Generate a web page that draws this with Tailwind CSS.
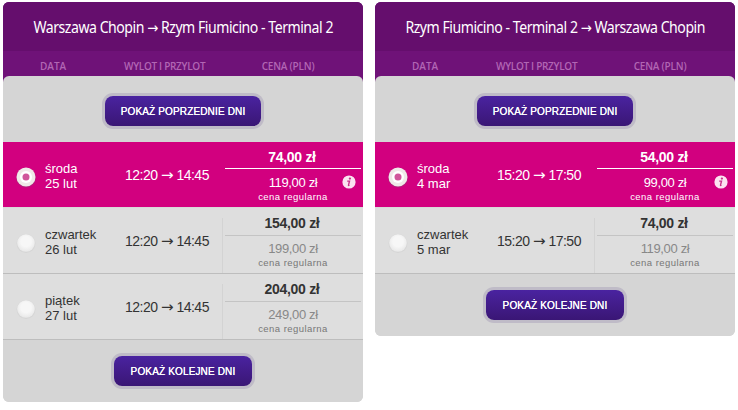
<!DOCTYPE html>
<html lang="pl">
<head>
    <meta charset="UTF-8">
    <meta name="viewport" content="width=device-width, initial-scale=1.0">
    <title>Wybierz lot</title>
    <script src="https://cdn.jsdelivr.net/npm/@tailwindcss/browser@4"></script>
</head>
<body class="bg-white font-['Liberation_Sans',Arial,sans-serif] text-[#333]">
    <svg class="absolute size-0">
        <defs>
            <radialGradient id="knob" cx="50%" cy="42%" r="58%">
                <stop offset="0.5" stop-color="#f7f7f7"/>
                <stop offset="1" stop-color="#e8e8e8"/>
            </radialGradient>
            <symbol id="radio-on" viewBox="0 0 22 22">
                <circle cx="11" cy="11.8" r="9.8" fill="#8f3f78" opacity=".5"/>
                <circle cx="11" cy="11" r="9.5" fill="#efe9e8"/>
                <circle cx="11" cy="11" r="6" fill="#fff"/>
                <circle cx="11" cy="11" r="3.5" fill="#d0569b"/>
            </symbol>
            <symbol id="radio-off" viewBox="0 0 22 22">
                <circle cx="11" cy="11.5" r="9.5" fill="#d6d6d6"/>
                <circle cx="11" cy="11" r="8.8" fill="url(#knob)"/>
            </symbol>
            <symbol id="info" viewBox="0 0 14 14">
                <circle cx="7" cy="7" r="6.6" fill="#fbe3f0"/>
                <circle cx="7.9" cy="3.6" r="1.15" fill="#c9308a"/>
                <path d="M5.2 6.1h2.3L6.5 10.2q-.1.6.9 0" fill="none" stroke="#c9308a" stroke-width="1.4"/>
            </symbol>
        </defs>
    </svg>

    <main class="flex items-start gap-3 pl-[3px] pt-[2px]">
        <!-- outbound -->
        <section class="w-[360px] shrink-0 overflow-hidden rounded-md bg-[#d5d5d5]">
            <div class="bg-[#6f1278] pb-1.5">
                <h2 class="flex h-[49px] items-center justify-center bg-[#650e6d] pt-0.5 font-['Noto_Sans'] text-base text-white"><span class="scale-x-[.88] whitespace-nowrap tracking-[-0.53px]">Warszawa Chopin <span class="font-['DejaVu_Sans'] text-[15px]">→</span> Rzym Fiumicino - Terminal 2</span></h2>
                <div class="flex h-[25px] items-center pt-[6px] font-['Open_Sans'] text-[10px] font-semibold text-[#b266b4]">
                    <span class="ml-[37px] w-[84px]">DATA</span>
                    <span class="w-[101px] whitespace-nowrap tracking-[-0.3px]">WYLOT I PRZYLOT</span>
                    <span class="w-[126px] text-center tracking-[-0.2px]">CENA (PLN)</span>
                </div>
            </div>
            <div class="-mt-1.5 rounded-t-md bg-[#d5d5d5]">
                <div class="flex h-[66px] items-center justify-center pt-1">
                    <button class="h-[30px] w-[156px] whitespace-nowrap rounded-lg bg-linear-to-b from-[#4a23a0] to-[#3a1675] pt-px text-[10px] tracking-[0.15px] text-white ring-[3px] ring-[#bfbbc7] text-shadow-[0_0_0_#fff]">POKAŻ POPRZEDNIE DNI</button>
                </div>

                <div class="flex h-[66px] items-center border-b border-[#d9d9d9] bg-[#d2007f] text-white">
                    <svg class="ml-3 mt-1 size-[22px]"><use href="#radio-on"/></svg>
                    <div class="ml-2 mt-0.5 w-20 text-[13px] leading-[15px]">środa<br>25 lut</div>
                    <div class="w-[100px] whitespace-nowrap pt-px text-sm tracking-[-0.5px]">12:20 <span class="font-['DejaVu_Sans'] text-[15px] leading-none">→</span> 14:45</div>
                    <div class="relative h-full w-[136px] text-center">
                        <div class="h-[27px] border-b border-white pr-0.5 pt-[5px] text-sm font-bold leading-5 tracking-[-0.3px]">74,00 zł</div>
                        <div class="pt-1.5 text-[13px] leading-[15px] tracking-[-0.35px]">119,00 zł</div>
                        <div class="pt-px text-[9.5px] leading-[11px] tracking-[0.45px]">cena regularna</div>
                        <svg class="absolute right-[5px] top-[33px] size-[14px]"><use href="#info"/></svg>
                    </div>
                </div>

                <div class="flex h-[66px] items-center border-b border-[#bdbdbd] bg-[#dedede]">
                    <svg class="ml-3 mt-1 size-[22px]"><use href="#radio-off"/></svg>
                    <div class="ml-2 mt-0.5 w-20 text-[13px] leading-[15px]">czwartek<br>26 lut</div>
                    <div class="w-[97px] whitespace-nowrap pt-px text-sm tracking-[-0.5px]">12:20 <span class="font-['DejaVu_Sans'] text-[15px] leading-none">→</span> 14:45</div>
                    <div class="mr-0.5 h-[55px] self-end border-l border-[#d3d3d3]"></div>
                    <div class="h-full w-[136px] text-center">
                        <div class="h-[28px] border-b border-[#c4c4c4] pr-0.5 pt-[5px] text-sm font-bold leading-5 tracking-[-0.3px]">154,00 zł</div>
                        <div class="pt-[5px] text-[13px] leading-[15px] tracking-[-0.35px] text-[#888]">199,00 zł</div>
                        <div class="pt-px text-[9.5px] leading-[11px] tracking-[0.45px] text-[#777]">cena regularna</div>
                    </div>
                </div>

                <div class="flex h-[66px] items-center border-b border-[#bdbdbd] bg-[#dedede]">
                    <svg class="ml-3 mt-1 size-[22px]"><use href="#radio-off"/></svg>
                    <div class="ml-2 mt-0.5 w-20 text-[13px] leading-[15px]">piątek<br>27 lut</div>
                    <div class="w-[97px] whitespace-nowrap pt-px text-sm tracking-[-0.5px]">12:20 <span class="font-['DejaVu_Sans'] text-[15px] leading-none">→</span> 14:45</div>
                    <div class="mr-0.5 h-[55px] self-end border-l border-[#d3d3d3]"></div>
                    <div class="h-full w-[136px] text-center">
                        <div class="h-[28px] border-b border-[#c4c4c4] pr-0.5 pt-[5px] text-sm font-bold leading-5 tracking-[-0.3px]">204,00 zł</div>
                        <div class="pt-[5px] text-[13px] leading-[15px] tracking-[-0.35px] text-[#888]">249,00 zł</div>
                        <div class="pt-px text-[9.5px] leading-[11px] tracking-[0.45px] text-[#777]">cena regularna</div>
                    </div>
                </div>

                <div class="flex h-[62px] items-center justify-center">
                    <button class="h-[30px] w-[138px] whitespace-nowrap rounded-lg bg-linear-to-b from-[#4a23a0] to-[#3a1675] pt-px text-[10px] tracking-[0.15px] text-white ring-[3px] ring-[#bfbbc7] text-shadow-[0_0_0_#fff]">POKAŻ KOLEJNE DNI</button>
                </div>
            </div>
        </section>

        <!-- return -->
        <section class="w-[360px] shrink-0 overflow-hidden rounded-md bg-[#d5d5d5]">
            <div class="bg-[#6f1278] pb-1.5">
                <h2 class="flex h-[49px] items-center justify-center bg-[#650e6d] pt-0.5 font-['Noto_Sans'] text-base text-white"><span class="scale-x-[.88] whitespace-nowrap tracking-[-0.53px]">Rzym Fiumicino - Terminal 2 <span class="font-['DejaVu_Sans'] text-[15px]">→</span> Warszawa Chopin</span></h2>
                <div class="flex h-[25px] items-center pt-[6px] font-['Open_Sans'] text-[10px] font-semibold text-[#b266b4]">
                    <span class="ml-[37px] w-[84px]">DATA</span>
                    <span class="w-[101px] whitespace-nowrap tracking-[-0.3px]">WYLOT I PRZYLOT</span>
                    <span class="w-[126px] text-center tracking-[-0.2px]">CENA (PLN)</span>
                </div>
            </div>
            <div class="-mt-1.5 rounded-t-md bg-[#d5d5d5]">
                <div class="flex h-[66px] items-center justify-center pt-1">
                    <button class="h-[30px] w-[156px] whitespace-nowrap rounded-lg bg-linear-to-b from-[#4a23a0] to-[#3a1675] pt-px text-[10px] tracking-[0.15px] text-white ring-[3px] ring-[#bfbbc7] text-shadow-[0_0_0_#fff]">POKAŻ POPRZEDNIE DNI</button>
                </div>

                <div class="flex h-[66px] items-center border-b border-[#d9d9d9] bg-[#d2007f] text-white">
                    <svg class="ml-3 mt-1 size-[22px]"><use href="#radio-on"/></svg>
                    <div class="ml-2 mt-0.5 w-20 text-[13px] leading-[15px]">środa<br>4 mar</div>
                    <div class="w-[100px] whitespace-nowrap pt-px text-sm tracking-[-0.5px]">15:20 <span class="font-['DejaVu_Sans'] text-[15px] leading-none">→</span> 17:50</div>
                    <div class="relative h-full w-[136px] text-center">
                        <div class="h-[27px] border-b border-white pr-0.5 pt-[5px] text-sm font-bold leading-5 tracking-[-0.3px]">54,00 zł</div>
                        <div class="pt-1.5 text-[13px] leading-[15px] tracking-[-0.35px]">99,00 zł</div>
                        <div class="pt-px text-[9.5px] leading-[11px] tracking-[0.45px]">cena regularna</div>
                        <svg class="absolute right-[5px] top-[33px] size-[14px]"><use href="#info"/></svg>
                    </div>
                </div>

                <div class="flex h-[66px] items-center border-b border-[#bdbdbd] bg-[#dedede]">
                    <svg class="ml-3 mt-1 size-[22px]"><use href="#radio-off"/></svg>
                    <div class="ml-2 mt-0.5 w-20 text-[13px] leading-[15px]">czwartek<br>5 mar</div>
                    <div class="w-[97px] whitespace-nowrap pt-px text-sm tracking-[-0.5px]">15:20 <span class="font-['DejaVu_Sans'] text-[15px] leading-none">→</span> 17:50</div>
                    <div class="mr-0.5 h-[55px] self-end border-l border-[#d3d3d3]"></div>
                    <div class="h-full w-[136px] text-center">
                        <div class="h-[28px] border-b border-[#c4c4c4] pr-0.5 pt-[5px] text-sm font-bold leading-5 tracking-[-0.3px]">74,00 zł</div>
                        <div class="pt-[5px] text-[13px] leading-[15px] tracking-[-0.35px] text-[#888]">119,00 zł</div>
                        <div class="pt-px text-[9.5px] leading-[11px] tracking-[0.45px] text-[#777]">cena regularna</div>
                    </div>
                </div>

                <div class="flex h-[62px] items-center justify-center">
                    <button class="h-[30px] w-[138px] whitespace-nowrap rounded-lg bg-linear-to-b from-[#4a23a0] to-[#3a1675] pt-px text-[10px] tracking-[0.15px] text-white ring-[3px] ring-[#bfbbc7] text-shadow-[0_0_0_#fff]">POKAŻ KOLEJNE DNI</button>
                </div>
            </div>
        </section>
    </main>
</body>
</html>
